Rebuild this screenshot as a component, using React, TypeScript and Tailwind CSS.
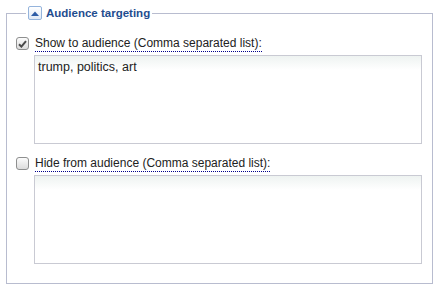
import React from "react";

const font = { fontFamily: '"Liberation Sans", Arial, sans-serif' };

const CheckBox = ({ checked }: { checked: boolean }) => (
  <span className="mt-[1px] flex h-[13px] w-[13px] shrink-0 items-center justify-center rounded-[3px] border border-[#8e8f8f] bg-gradient-to-b from-[#fcfcfc] to-[#dcdcdc]">
    {checked && (
      <svg width="9" height="8" viewBox="0 0 9 8">
        <path d="M1 4.2 L3.4 6.6 L8 1.2" fill="none" stroke="#4a4a4a" strokeWidth="2" />
      </svg>
    )}
  </span>
);

const Field = ({ checked, label, value }: { checked: boolean; label: string; value: string }) => (
  <div className="flex flex-col">
    <div className="flex items-start">
      <CheckBox checked={checked} />
      <span className="ml-[6px] border-b border-dotted border-[#00008b] text-[12px] leading-[15px] text-[#222]">
        {label}
      </span>
    </div>
    <div className="ml-[18px] mt-[3px] h-[89px] w-[388px] border border-[#c9cad3] bg-[linear-gradient(#eef3f1,#ffffff_14px)] px-[3px] pt-[3px] text-[12.5px] leading-[16px] text-[#222]">
      {value}
    </div>
  </div>
);

export default function App() {
  return (
    <div className="h-[292px] w-[439px] bg-white pt-[6px]" style={font}>
      <fieldset className="ml-[6px] w-[427px] border border-[#b8bccf] pb-[19px] pl-[9px]">
        <legend className="ml-[10px] flex items-center px-[2px]">
          <span className="flex h-[14px] w-[14px] items-center justify-center rounded-[2px] border border-[#95b4dc] bg-gradient-to-b from-white to-[#dfe9f6]">
            <svg width="8" height="5" viewBox="0 0 8 5">
              <path d="M0 5 L4 0.5 L8 5 Z" fill="#2d5ca6" />
            </svg>
          </span>
          <span className="ml-[4px] text-[11.5px] font-bold leading-[14px] text-[#1f4d8f]">Audience targeting</span>
        </legend>
        <div className="flex flex-col gap-[12px] pt-[16px]">
          <Field checked label="Show to audience (Comma separated list):" value="trump, politics, art" />
          <Field checked={false} label="Hide from audience (Comma separated list):" value="" />
        </div>
      </fieldset>
    </div>
  );
}
